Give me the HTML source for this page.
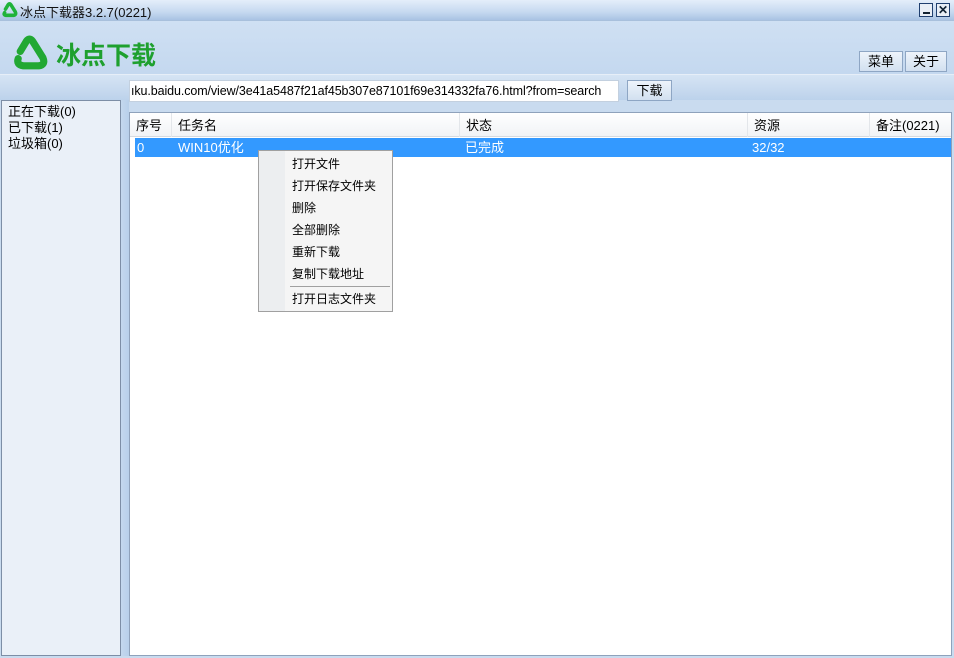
<!DOCTYPE html>
<html><head><meta charset="utf-8"><style>
*{margin:0;padding:0;box-sizing:border-box}
body{width:954px;height:658px;overflow:hidden;background:#c9dbef;font-family:"Liberation Sans","Noto Sans CJK SC",sans-serif;font-size:12px;color:#000;position:relative}
.abs{position:absolute}
.title{left:0;top:0;width:954px;height:20px;background:linear-gradient(#e4eefa,#c6d9f0 60%,#a9c3e3);}
.title span{position:absolute;left:20px;top:2px;font-size:13px;color:#111}
.hdr{left:0;top:20px;width:954px;height:54px;background:linear-gradient(#cfe0f3,#c4d8ef);border-top:1px solid #a8c0dc}
.tb{left:0;top:74px;width:954px;height:26px;background:linear-gradient(#d6e4f4,#bcd2eb);border-top:1px solid #e6eef8}
.btn{border:1px solid #8ea6c4;background:linear-gradient(#eef4fb,#d2e0f0);font-size:13px;text-align:center;line-height:19px;height:21px}
.left{left:1px;top:100px;width:120px;height:556px;background:#eaf0f8;border:1px solid #7d8ea6}
.split{left:121px;top:100px;width:8px;height:556px;background:linear-gradient(90deg,#c4d8ee,#b8cfea)}
.list{left:129px;top:112px;width:823px;height:544px;background:#fff;border:1px solid #8fa2bb}
.lh{position:absolute;top:0;height:24px;line-height:26px;font-size:13px;border-right:1px solid #e3e6ea;padding-left:6px}
.menu{left:258px;top:150px;width:135px;height:162px;background:#f5f5f5;border:1px solid #a0a0a0}
.menu div{position:absolute;left:33px;font-size:12px}
</style></head><body>
<div class="abs title">
<svg class="abs" style="left:1px;top:2px" width="17" height="16" viewBox="0 0 36 36"><path d="M9 16 L15 6 Q18 2 21 6 L31 22 Q34 29 27 30 L10 30 Q4 29 7 24" fill="none" stroke="#1fb33a" stroke-width="8" stroke-linecap="round" stroke-linejoin="round"/></svg>
<span>冰点下载器3.2.7(0221)</span>
<div class="abs" style="left:919px;top:3px;width:14px;height:14px;border:1px solid #1f3f6f;background:#e8eef6"><div class="abs" style="left:3px;top:8px;width:7px;height:2px;background:#123"></div></div>
<div class="abs" style="left:936px;top:3px;width:14px;height:14px;border:1px solid #1f3f6f;background:#e8eef6;font-size:12px;line-height:12px;text-align:center;font-weight:bold;color:#123">✕</div>
</div>
<div class="abs hdr">
<svg class="abs" style="left:11px;top:14px" width="37" height="37" viewBox="0 0 36 36"><path d="M9 16 L15 6 Q18 2 21 6 L31 22 Q34 29 27 30 L12 30 Q5 29 7 23" fill="none" stroke="#22a833" stroke-width="7" stroke-linecap="round" stroke-linejoin="round"/></svg>
<div class="abs" style="left:56px;top:15px;font-size:25px;font-weight:bold;color:#1ea02e">冰点下载</div>
<div class="abs btn" style="left:859px;top:30px;width:44px">菜单</div>
<div class="abs btn" style="left:905px;top:30px;width:42px">关于</div>
</div>
<div class="abs tb">
<div class="abs" style="left:129px;top:5px;width:490px;height:22px;background:#fff;border:1px solid #c3d0df;font-size:12.5px;letter-spacing:-0.1px;line-height:20px;padding-left:1px;white-space:nowrap;overflow:hidden">ıku.baidu.com/view/3e41a5487f21af45b307e87101f69e314332fa76.html?from=search</div>
<div class="abs btn" style="left:627px;top:5px;width:45px">下载</div>
</div>
<div class="abs left"><div style="padding:3px 0 0 6px;font-size:13px;line-height:16px">正在下载(0)<br>已下载(1)<br>垃圾箱(0)</div></div>
<div class="abs split"></div>
<div class="abs list">
<div style="position:absolute;left:0;top:0;width:821px;height:24px;background:linear-gradient(#fff,#f1f3f6);border-bottom:1px solid #d5dae0"></div>
<div class="lh" style="left:0;width:42px">序号</div>
<div class="lh" style="left:42px;width:288px">任务名</div>
<div class="lh" style="left:330px;width:288px">状态</div>
<div class="lh" style="left:618px;width:122px">资源</div>
<div class="lh" style="left:740px;width:81px;border:none">备注(0221)</div>
<div class="abs" style="left:5px;top:25px;width:816px;height:19px;background:#3399ff;color:#fff;font-size:13px;line-height:19px">
<span class="abs" style="left:2px">0</span><span class="abs" style="left:43px">WIN10优化</span><span class="abs" style="left:330px">已完成</span><span class="abs" style="left:617px">32/32</span></div>
</div>
<div class="abs menu">
<div class="abs" style="left:0;top:0;width:26px;height:160px;background:#eceef0"></div>
<div style="top:4px">打开文件</div>
<div style="top:26px">打开保存文件夹</div>
<div style="top:48px">删除</div>
<div style="top:70px">全部删除</div>
<div style="top:92px">重新下载</div>
<div style="top:114px">复制下载地址</div>
<div style="top:135px;left:31px;width:100px;height:1px;background:#a0a0a0"></div>
<div style="top:139px">打开日志文件夹</div>
</div>
</body></html>
